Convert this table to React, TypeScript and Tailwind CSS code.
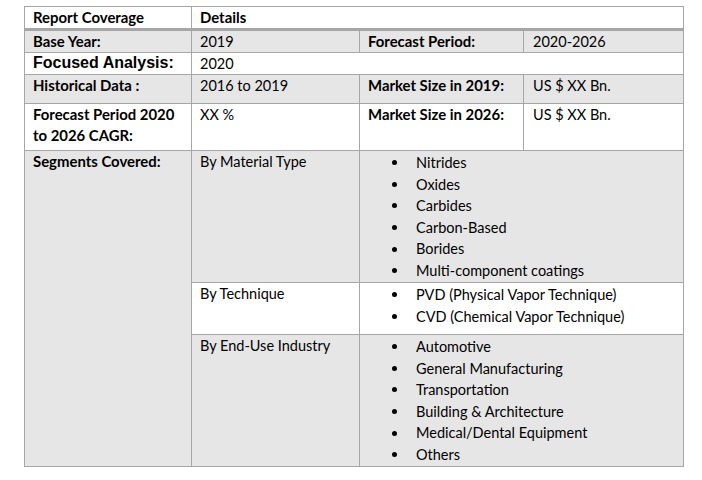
const font = { fontFamily: 'Lato, "Open Sans", sans-serif' }

const materials = ['Nitrides', 'Oxides', 'Carbides', 'Carbon-Based', 'Borides', 'Multi-component coatings']
const techniques = ['PVD (Physical Vapor Technique)', 'CVD (Chemical Vapor Technique)']
const industries = [
  'Automotive',
  'General Manufacturing',
  'Transportation',
  'Building & Architecture',
  'Medical/Dental Equipment',
  'Others',
]

function Bullets({ items }: { items: string[] }) {
  return (
    <ul className="pt-[1px]">
      {items.map((item) => (
        <li key={item} className="flex items-center leading-[21.6px]">
          <span className="ml-[32px] mr-[19px] h-[5px] w-[5px] rounded-full bg-black" />
          {item}
        </li>
      ))}
    </ul>
  )
}

export default function App() {
  const gray = 'bg-[#e7e6e6]'
  const white = 'bg-white'
  const cell = 'pl-[8px] leading-[21px]'
  const bold = 'font-bold text-[14.9px]'
  return (
    <div className="h-[480px] w-[702px] bg-white pl-[24px] pt-[6px] text-[14.5px] text-black" style={font}>
      <div className="grid w-[660px] grid-cols-[166px_167px_163px_159px] grid-rows-[23px_21px_21px_28px_46px_131px_51px_131px] gap-px bg-[#a6a6a6] p-px">
        {/* header */}
        <div className={`${white} ${cell} ${bold} border-b-2 border-[#a6a6a6]`}>Report Coverage</div>
        <div className={`${white} ${cell} ${bold} col-span-3 border-b-2 border-[#a6a6a6]`}>Details</div>

        <div className={`${gray} ${cell} ${bold}`}>Base Year:</div>
        <div className={`${gray} ${cell}`}>2019</div>
        <div className={`${gray} ${cell} ${bold}`}>Forecast Period:</div>
        <div className={`${gray} ${cell} pl-[9px]`}>2020-2026</div>

        <div
          className={`${white} pl-[8px] text-[16px] font-bold leading-[19px]`}
          style={{ fontFamily: '"Liberation Sans", Arial, sans-serif' }}
        >
          Focused Analysis:
        </div>
        <div className={`${white} ${cell} col-span-3`}>2020</div>

        <div className={`${gray} ${cell} ${bold}`}>Historical Data :</div>
        <div className={`${gray} ${cell}`}>2016 to 2019</div>
        <div className={`${gray} ${cell} ${bold}`}>Market Size in 2019:</div>
        <div className={`${gray} ${cell} pl-[9px]`}>US $ XX Bn.</div>

        <div className={`${white} ${cell} ${bold}`}>
          Forecast Period 2020
          <br />
          to 2026 CAGR:
        </div>
        <div className={`${white} ${cell}`}>XX %</div>
        <div className={`${white} ${cell} ${bold}`}>Market Size in 2026:</div>
        <div className={`${white} ${cell} pl-[9px]`}>US $ XX Bn.</div>

        <div className={`${gray} ${cell} ${bold} row-span-3`}>Segments Covered:</div>
        <div className={`${gray} ${cell}`}>By Material Type</div>
        <div className={`${gray} col-span-2`}>
          <Bullets items={materials} />
        </div>

        <div className={`${white} ${cell}`}>By Technique</div>
        <div className={`${white} col-span-2`}>
          <Bullets items={techniques} />
        </div>

        <div className={`${gray} ${cell}`}>By End-Use Industry</div>
        <div className={`${gray} col-span-2`}>
          <Bullets items={industries} />
        </div>
      </div>
    </div>
  )
}
